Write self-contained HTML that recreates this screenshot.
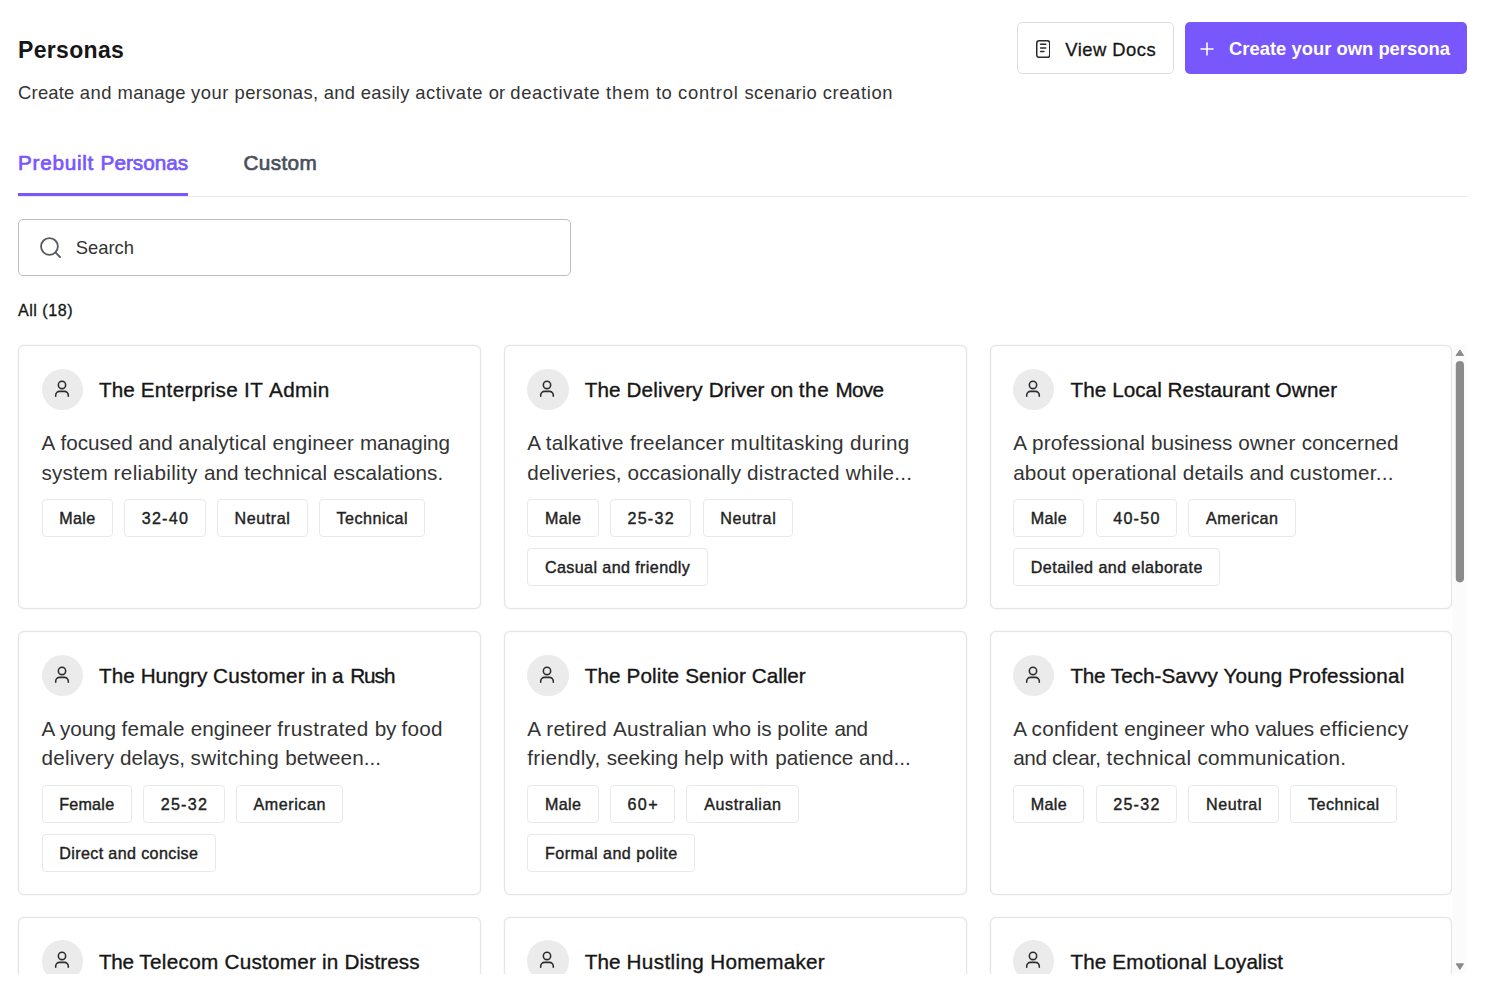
<!DOCTYPE html>
<html lang="en">
<head>
<meta charset="utf-8">
<title>Personas</title>
<style>
*{box-sizing:border-box}
html,body{margin:0;padding:0;background:#fff}
body{width:1488px;height:995px;overflow:hidden;font-family:"Liberation Sans",sans-serif;color:#161616;-webkit-font-smoothing:antialiased}
.page{position:relative;width:1488px;height:995px;overflow:hidden}
h1{position:absolute;left:18px;top:35.7px;margin:0;font-size:23px;line-height:28px;font-weight:700;color:#161616;white-space:nowrap}
.sub{position:absolute;left:18.1px;top:79.6px;margin:0;font-size:18.4px;line-height:26px;color:#333;white-space:pre}
.btn{position:absolute;top:22px;height:52px;border-radius:5px;display:flex;align-items:center;font-size:18.4px;white-space:nowrap}
.btn.docs{left:1016.7px;width:157px;height:52.3px;border:1px solid #dedede;background:#fff;color:#161616;-webkit-text-stroke:0.3px #161616}
.btn.docs svg{position:absolute;left:18.3px;top:17.1px;fill:none;stroke:#2a2a2e;stroke-width:1.5;stroke-linecap:round}
.btn.docs span{position:absolute;left:47.6px;top:14.5px;line-height:24px}
.btn.create{left:1185px;width:282px;background:#7857fc;color:#fff;font-weight:700}
.btn.create svg{position:absolute;left:14.6px;top:19.5px;fill:none;stroke:#fff;stroke-width:1.6}
.btn.create span{position:absolute;left:44px;top:15px;line-height:24px}
.tabs{position:absolute;left:18px;top:140px;width:1449px;height:57px;border-bottom:1px solid #e8e8e8}
.tab{position:absolute;top:8.8px;font-size:20.7px;line-height:28px;font-weight:400;color:#4a4f5c;white-space:pre;-webkit-text-stroke:0.7px #4a4f5c}
.tab.active{left:0;color:#7857fc;-webkit-text-stroke-color:#7857fc}
.tab.active:after{content:"";position:absolute;left:0;width:170px;top:44.6px;height:3px;background:#7857fc}
.tab+.tab{left:225.5px}
.search{position:absolute;left:18px;top:219px;width:553px;height:57px;border:1px solid #bebebe;border-radius:5px;background:#fff;font-size:18.4px;color:#333}
.search svg{position:absolute;left:21.2px;top:17.1px;fill:none;stroke:#565a60;stroke-width:1.8;stroke-linecap:round}
.search span{position:absolute;left:56.7px;top:15px;line-height:26px;white-space:nowrap}
.count{position:absolute;left:18px;top:299px;font-size:16.1px;line-height:22px;color:#161616;white-space:nowrap;-webkit-text-stroke:0.3px #161616}
.scroll{position:absolute;left:0;top:340px;width:1488px;height:633.5px;overflow:hidden}
.grid{position:absolute;left:18px;top:5.4px;width:1434.3px;display:grid;grid-template-columns:repeat(3,1fr);column-gap:23px;row-gap:22.55px}
.card{position:relative;height:263.3px;border:1px solid #e5e5e5;border-radius:6px;background:#fff;box-shadow:0 0 1.5px rgba(0,0,0,.10),inset 0 0 1.5px rgba(0,0,0,.07);padding:22.4px 22.5px}
.chead{display:flex;align-items:center;height:41.3px}
.avatar{width:41.3px;height:41.3px;border-radius:50%;background:#ebebeb;display:flex;align-items:center;justify-content:center;flex:none}
.avatar svg{fill:none;stroke:#2c2c30;stroke-width:1.55;stroke-linecap:round}
.ctitle{margin-left:16.1px;position:relative;top:0.5px;font-size:20.7px;line-height:28px;color:#161616;white-space:pre;-webkit-text-stroke:0.35px #161616}
.cdesc{margin:17.6px 0 0 0.1px;font-size:20.7px;line-height:29.9px;color:#333;white-space:pre}
.tags{display:flex;gap:11.2px;margin-top:11.7px;height:37.6px}
.cdesc+.tags{margin-top:11.3px}
.tag{height:38px;border:1px solid #e9e9e9;border-radius:4px;font-size:16.1px;line-height:37px;text-align:center;color:#222;white-space:nowrap;-webkit-text-stroke:0.4px #222;flex:none}
.sbar{position:absolute;left:1452px;top:5px;width:15px;height:629px;display:block}

</style>
</head>
<body>
<div class="page">
  <header class="top">
    <h1 style="letter-spacing:0.32px">Personas</h1>
    <p class="sub"><span style="letter-spacing:0.198px">Create </span><span style="letter-spacing:0.501px">and </span><span style="letter-spacing:0.275px">manage </span><span style="letter-spacing:0.522px">your </span><span style="letter-spacing:0.332px">personas, </span><span style="letter-spacing:0.276px">and </span><span style="letter-spacing:0.337px">easily </span><span style="letter-spacing:0.567px">activate </span><span style="letter-spacing:0.01px">or </span><span style="letter-spacing:0.622px">deactivate </span><span style="letter-spacing:0.76px">them </span><span style="letter-spacing:0.549px">to </span><span style="letter-spacing:0.773px">control </span><span style="letter-spacing:0.386px">scenario </span><span style="letter-spacing:0.637px">creation</span></p>
    <a class="btn docs"><svg class="docicon" viewBox="0 0 14.5 18.1" width="14.5" height="18.1"><rect x="0.75" y="0.75" width="13" height="16.6" rx="2.4"/><path d="M4.55 4.35h5.2M4.55 7.97h5.2M4.55 11.6h3.4"/></svg><span style="letter-spacing:0.482px">View Docs</span></a>
    <a class="btn create"><svg class="plus" viewBox="0 0 14 14" width="14" height="14"><path d="M7 0.5v13M0.5 7h13"/></svg><span style="letter-spacing:0.011px">Create your own persona</span></a>
  </header>
  <nav class="tabs">
    <span class="tab active"><span style="letter-spacing:0.744px">Prebuilt </span><span style="letter-spacing:-0.001px">Personas</span></span>
    <span class="tab" style="letter-spacing:0.394px">Custom</span>
  </nav>
  <div class="search"><svg class="sicon" viewBox="0 0 22 22" width="22" height="22"><circle cx="9.45" cy="9.45" r="8.4"/><path d="M15.4 15.4l4.6 4.6"/></svg><span style="letter-spacing:-0.006px">Search</span></div>
  <div class="count" style="letter-spacing:0.502px">All (18)</div>
  <div class="scroll">
    <div class="grid">
<div class="card">
  <div class="chead"><span class="avatar"><svg class="pi" viewBox="0 0 41.3 41.3" width="41.3" height="41.3"><circle cx="20" cy="16" r="3.65"/><path d="M13.7 27.2v-1a3.8 3.8 0 0 1 3.8-3.8h5a3.8 3.8 0 0 1 3.8 3.8v1"/></svg></span><span class="ctitle"><span style="letter-spacing:0.098px">The </span><span style="letter-spacing:0.296px">Enterprise </span><span style="letter-spacing:0.445px">IT </span><span style="letter-spacing:0.365px">Admin</span></span></div>
  <p class="cdesc"><span style="letter-spacing:0.247px">A </span><span style="letter-spacing:-0.04px">focused </span><span style="letter-spacing:-0.041px">and </span><span style="letter-spacing:0.182px">analytical </span><span style="letter-spacing:0.137px">engineer </span><span style="letter-spacing:-0.125px">managing</span><br><span style="letter-spacing:0.105px">system </span><span style="letter-spacing:0.339px">reliability </span><span style="letter-spacing:0.009px">and </span><span style="letter-spacing:0.159px">technical </span><span style="letter-spacing:0.068px">escalations.</span></p>
  <div class="tags"><span class="tag" style="width:71.3px;letter-spacing:0.336px;text-indent:0.336px">Male</span><span class="tag" style="width:81.6px;letter-spacing:1.257px;text-indent:1.257px">32-40</span><span class="tag" style="width:90.9px;letter-spacing:0.602px;text-indent:0.602px">Neutral</span><span class="tag" style="width:106.5px;letter-spacing:0.501px;text-indent:0.501px">Technical</span></div>
</div>
<div class="card">
  <div class="chead"><span class="avatar"><svg class="pi" viewBox="0 0 41.3 41.3" width="41.3" height="41.3"><circle cx="20" cy="16" r="3.65"/><path d="M13.7 27.2v-1a3.8 3.8 0 0 1 3.8-3.8h5a3.8 3.8 0 0 1 3.8 3.8v1"/></svg></span><span class="ctitle"><span style="letter-spacing:0.098px">The </span><span style="letter-spacing:0.203px">Delivery </span><span style="letter-spacing:0.111px">Driver </span><span style="letter-spacing:-0.155px">on </span><span style="letter-spacing:0.571px">the </span><span style="letter-spacing:-0.731px">Move</span></span></div>
  <p class="cdesc"><span style="letter-spacing:-0.003px">A </span><span style="letter-spacing:0.246px">talkative </span><span style="letter-spacing:0.268px">freelancer </span><span style="letter-spacing:0.34px">multitasking </span><span style="letter-spacing:0.357px">during</span><br><span style="letter-spacing:0.109px">deliveries, </span><span style="letter-spacing:0.073px">occasionally </span><span style="letter-spacing:0.306px">distracted </span><span style="letter-spacing:0.273px">while...</span></p>
  <div class="tags"><span class="tag" style="width:71.3px;letter-spacing:0.336px;text-indent:0.336px">Male</span><span class="tag" style="width:81.6px;letter-spacing:1.257px;text-indent:1.257px">25-32</span><span class="tag" style="width:90.9px;letter-spacing:0.602px;text-indent:0.602px">Neutral</span></div>
  <div class="tags"><span class="tag" style="width:180.3px;letter-spacing:0.395px;text-indent:0.395px">Casual and friendly</span></div>
</div>
<div class="card">
  <div class="chead"><span class="avatar"><svg class="pi" viewBox="0 0 41.3 41.3" width="41.3" height="41.3"><circle cx="20" cy="16" r="3.65"/><path d="M13.7 27.2v-1a3.8 3.8 0 0 1 3.8-3.8h5a3.8 3.8 0 0 1 3.8 3.8v1"/></svg></span><span class="ctitle"><span style="letter-spacing:0.098px">The </span><span style="letter-spacing:0.014px">Local </span><span style="letter-spacing:0.104px">Restaurant </span><span style="letter-spacing:0.141px">Owner</span></span></div>
  <p class="cdesc"><span style="letter-spacing:0.247px">A </span><span style="letter-spacing:0.123px">professional </span><span style="letter-spacing:-0.023px">business </span><span style="letter-spacing:0.234px">owner </span><span style="letter-spacing:0.024px">concerned</span><br><span style="letter-spacing:0.195px">about </span><span style="letter-spacing:0.231px">operational </span><span style="letter-spacing:0.167px">details </span><span style="letter-spacing:-0.041px">and </span><span style="letter-spacing:0.271px">customer...</span></p>
  <div class="tags"><span class="tag" style="width:71.3px;letter-spacing:0.336px;text-indent:0.336px">Male</span><span class="tag" style="width:81.6px;letter-spacing:1.257px;text-indent:1.257px">40-50</span><span class="tag" style="width:107.4px;letter-spacing:0.574px;text-indent:0.574px">American</span></div>
  <div class="tags"><span class="tag" style="width:207.1px;letter-spacing:0.464px;text-indent:0.464px">Detailed and elaborate</span></div>
</div>
<div class="card">
  <div class="chead"><span class="avatar"><svg class="pi" viewBox="0 0 41.3 41.3" width="41.3" height="41.3"><circle cx="20" cy="16" r="3.65"/><path d="M13.7 27.2v-1a3.8 3.8 0 0 1 3.8-3.8h5a3.8 3.8 0 0 1 3.8 3.8v1"/></svg></span><span class="ctitle"><span style="letter-spacing:0.098px">The </span><span style="letter-spacing:-0.005px">Hungry </span><span style="letter-spacing:0.264px">Customer </span><span style="letter-spacing:-0.253px">in </span><span style="letter-spacing:0.467px">a </span><span style="letter-spacing:-0.999px">Rush</span></span></div>
  <p class="cdesc"><span style="letter-spacing:-0.003px">A </span><span style="letter-spacing:-0.104px">young </span><span style="letter-spacing:0.194px">female </span><span style="letter-spacing:0.037px">engineer </span><span style="letter-spacing:0.387px">frustrated </span><span style="letter-spacing:-0.27px">by </span><span style="letter-spacing:0.211px">food</span><br><span style="letter-spacing:0.161px">delivery </span><span style="letter-spacing:-0.1px">delays, </span><span style="letter-spacing:0.376px">switching </span><span style="letter-spacing:0.048px">between...</span></p>
  <div class="tags"><span class="tag" style="width:90.3px;letter-spacing:0.246px;text-indent:0.246px">Female</span><span class="tag" style="width:81.6px;letter-spacing:1.257px;text-indent:1.257px">25-32</span><span class="tag" style="width:107.4px;letter-spacing:0.574px;text-indent:0.574px">American</span></div>
  <div class="tags"><span class="tag" style="width:174.2px;letter-spacing:0.377px;text-indent:0.377px">Direct and concise</span></div>
</div>
<div class="card">
  <div class="chead"><span class="avatar"><svg class="pi" viewBox="0 0 41.3 41.3" width="41.3" height="41.3"><circle cx="20" cy="16" r="3.65"/><path d="M13.7 27.2v-1a3.8 3.8 0 0 1 3.8-3.8h5a3.8 3.8 0 0 1 3.8 3.8v1"/></svg></span><span class="ctitle"><span style="letter-spacing:0.098px">The </span><span style="letter-spacing:0.171px">Polite </span><span style="letter-spacing:0.162px">Senior </span><span style="letter-spacing:-0.069px">Caller</span></span></div>
  <p class="cdesc"><span style="letter-spacing:0.247px">A </span><span style="letter-spacing:0.289px">retired </span><span style="letter-spacing:0.195px">Australian </span><span style="letter-spacing:0.074px">who </span><span style="letter-spacing:-0.129px">is </span><span style="letter-spacing:0.297px">polite </span><span style="letter-spacing:-0.466px">and</span><br><span style="letter-spacing:0.264px">friendly, </span><span style="letter-spacing:0.03px">seeking </span><span style="letter-spacing:0.225px">help </span><span style="letter-spacing:0.531px">with </span><span style="letter-spacing:-0.019px">patience </span><span style="letter-spacing:-0.013px">and...</span></p>
  <div class="tags"><span class="tag" style="width:71.3px;letter-spacing:0.336px;text-indent:0.336px">Male</span><span class="tag" style="width:65.5px;letter-spacing:1.394px;text-indent:1.394px">60+</span><span class="tag" style="width:112.3px;letter-spacing:0.591px;text-indent:0.591px">Australian</span></div>
  <div class="tags"><span class="tag" style="width:167.7px;letter-spacing:0.497px;text-indent:0.497px">Formal and polite</span></div>
</div>
<div class="card">
  <div class="chead"><span class="avatar"><svg class="pi" viewBox="0 0 41.3 41.3" width="41.3" height="41.3"><circle cx="20" cy="16" r="3.65"/><path d="M13.7 27.2v-1a3.8 3.8 0 0 1 3.8-3.8h5a3.8 3.8 0 0 1 3.8 3.8v1"/></svg></span><span class="ctitle"><span style="letter-spacing:-0.252px">The </span><span style="letter-spacing:0.003px">Tech-Savvy </span><span style="letter-spacing:0.205px">Young </span><span style="letter-spacing:0.178px">Professional</span></span></div>
  <p class="cdesc"><span style="letter-spacing:-0.003px">A </span><span style="letter-spacing:0.288px">confident </span><span style="letter-spacing:0.037px">engineer </span><span style="letter-spacing:0.224px">who </span><span style="letter-spacing:-0.209px">values </span><span style="letter-spacing:0.336px">efficiency</span><br><span style="letter-spacing:-0.341px">and </span><span style="letter-spacing:-0.1px">clear, </span><span style="letter-spacing:0.349px">technical </span><span style="letter-spacing:0.294px">communication.</span></p>
  <div class="tags"><span class="tag" style="width:71.3px;letter-spacing:0.336px;text-indent:0.336px">Male</span><span class="tag" style="width:81.6px;letter-spacing:1.257px;text-indent:1.257px">25-32</span><span class="tag" style="width:90.9px;letter-spacing:0.602px;text-indent:0.602px">Neutral</span><span class="tag" style="width:106.5px;letter-spacing:0.501px;text-indent:0.501px">Technical</span></div>
</div>
<div class="card">
  <div class="chead"><span class="avatar"><svg class="pi" viewBox="0 0 41.3 41.3" width="41.3" height="41.3"><circle cx="20" cy="16" r="3.65"/><path d="M13.7 27.2v-1a3.8 3.8 0 0 1 3.8-3.8h5a3.8 3.8 0 0 1 3.8 3.8v1"/></svg></span><span class="ctitle"><span style="letter-spacing:-0.252px">The </span><span style="letter-spacing:0.315px">Telecom </span><span style="letter-spacing:0.231px">Customer </span><span style="letter-spacing:0.18px">in </span><span style="letter-spacing:0.04px">Distress</span></span></div>
  <p class="cdesc"><span style="letter-spacing:0.121px;word-spacing:-0.828px">A frustrated customer dealing with repeated</span><br><span style="letter-spacing:0.588px;word-spacing:-0.828px">network issues and billing errors...</span></p>
  <div class="tags"><span class="tag" style="width:71.3px;letter-spacing:0.336px;text-indent:0.336px">Male</span><span class="tag" style="width:81.6px;letter-spacing:1.257px;text-indent:1.257px">32-40</span><span class="tag" style="width:90.9px;letter-spacing:0.602px;text-indent:0.602px">Neutral</span></div>
</div>
<div class="card">
  <div class="chead"><span class="avatar"><svg class="pi" viewBox="0 0 41.3 41.3" width="41.3" height="41.3"><circle cx="20" cy="16" r="3.65"/><path d="M13.7 27.2v-1a3.8 3.8 0 0 1 3.8-3.8h5a3.8 3.8 0 0 1 3.8 3.8v1"/></svg></span><span class="ctitle"><span style="letter-spacing:0.098px">The </span><span style="letter-spacing:0.378px">Hustling </span><span style="letter-spacing:0.191px">Homemaker</span></span></div>
  <p class="cdesc"><span style="letter-spacing:-0.02px;word-spacing:-0.828px">A busy homemaker juggling chores while</span><br><span style="letter-spacing:0.083px;word-spacing:-0.828px">seeking quick answers and support...</span></p>
  <div class="tags"><span class="tag" style="width:90.3px;letter-spacing:0.246px;text-indent:0.246px">Female</span><span class="tag" style="width:81.6px;letter-spacing:1.257px;text-indent:1.257px">32-40</span><span class="tag" style="width:107.4px;letter-spacing:0.574px;text-indent:0.574px">American</span></div>
</div>
<div class="card">
  <div class="chead"><span class="avatar"><svg class="pi" viewBox="0 0 41.3 41.3" width="41.3" height="41.3"><circle cx="20" cy="16" r="3.65"/><path d="M13.7 27.2v-1a3.8 3.8 0 0 1 3.8-3.8h5a3.8 3.8 0 0 1 3.8 3.8v1"/></svg></span><span class="ctitle"><span style="letter-spacing:0.098px">The </span><span style="letter-spacing:0.325px">Emotional </span><span style="letter-spacing:-0.065px">Loyalist</span></span></div>
  <p class="cdesc"><span style="letter-spacing:0.387px;word-spacing:-0.828px">A long-time customer who feels let down</span><br><span style="letter-spacing:0.177px;word-spacing:-0.828px">and wants to be heard and valued...</span></p>
  <div class="tags"><span class="tag" style="width:90.3px;letter-spacing:0.246px;text-indent:0.246px">Female</span><span class="tag" style="width:81.6px;letter-spacing:1.257px;text-indent:1.257px">40-50</span><span class="tag" style="width:90.9px;letter-spacing:0.602px;text-indent:0.602px">Neutral</span></div>
</div>

    </div>
    <svg class="sbar" viewBox="0 0 15 629" width="15" height="629"><rect x="0.7" y="0.1" width="13.8" height="628.3" fill="#fbfbfb"/><polygon points="4.1,10.5 11.6,10.5 7.85,4.9" fill="#8b8b8b" stroke="#8b8b8b" stroke-width="1" stroke-linejoin="round"/><rect x="3.8" y="16.1" width="8.2" height="221.3" rx="4.1" fill="#8b8b8b"/><polygon points="4.2,618.8 11.5,618.8 7.85,624.4" fill="#8b8b8b" stroke="#8b8b8b" stroke-width="1" stroke-linejoin="round"/></svg>
  </div>
</div>
</body>
</html>
